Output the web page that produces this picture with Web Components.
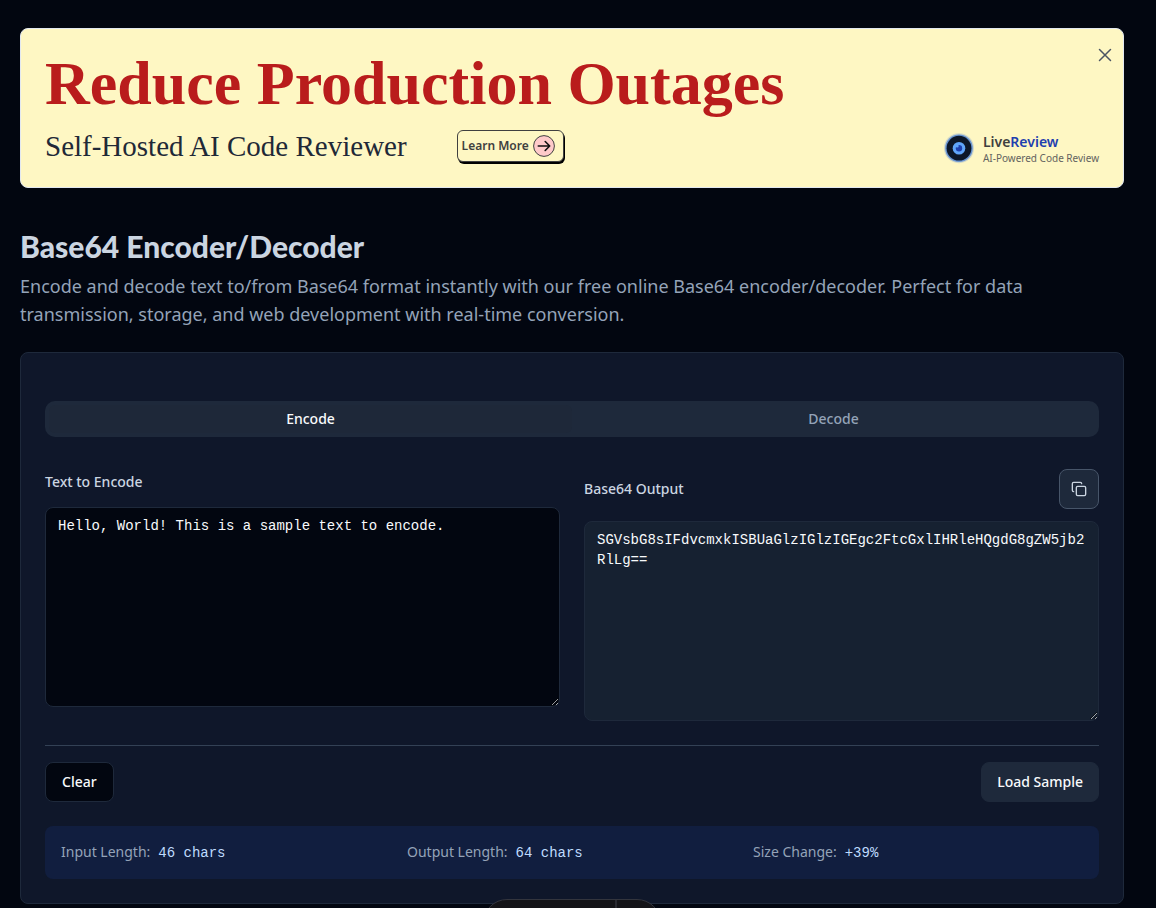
<!DOCTYPE html>
<html lang="en">
<head>
<meta charset="utf-8">
<meta name="viewport" content="width=device-width, initial-scale=1">
<title>Base64 Encoder/Decoder</title>
<style>
:root{
  --bg:#020610;--card:#0f172a;--line:#1e293b;--muted:#1e293b;--text:#f8fafc;--soft:#cbd5e1;--dim:#94a3b8;
  --mono:"Liberation Mono",monospace;
}
body{margin:0;background:var(--bg);color:var(--text);font-family:"Noto Sans",sans-serif;font-size:14px;line-height:20px}
</style>
</head>
<body>
<tool-page>
  <promo-banner slot="promo">
    <span slot="title">Reduce Production Outages</span>
    <span slot="subtitle">Self-Hosted AI Code Reviewer</span>
    <brand-mark slot="brand"></brand-mark>
  </promo-banner>
  <page-heading>
    <span slot="title">Base64 Encoder/Decoder</span>
    Encode and decode text to/from Base64 format instantly with our free online Base64 encoder/decoder. Perfect for data transmission, storage, and web development with real-time conversion.
  </page-heading>
  <base64-tool></base64-tool>
</tool-page>
<dock-pill></dock-pill>

<script>
const define = (name, html, setup) => {
  const template = document.createElement('template');
  template.innerHTML = html;
  customElements.define(name, class extends HTMLElement {
    constructor() {
      super();
      this.attachShadow({ mode: 'open' }).append(template.content.cloneNode(true));
      if (setup) setup(this.shadowRoot, this);
    }
  });
};

define('tool-page', `
<style>
  :host{display:block;padding:28px 32px 0 20px}
  main{display:flex;flex-direction:column;margin-top:40px;gap:24px}
</style>
<slot name="promo"></slot>
<main><slot></slot></main>`);

define('brand-mark', `
<style>
  :host{display:block}
  a{display:flex;align-items:center;gap:8px;text-decoration:none;color:#404040}
  svg{flex:none}
  strong{display:block;font-size:14px;line-height:18px;font-weight:600}
  b{color:#1e40af;font-weight:600}
  small{display:block;font-size:10px;line-height:14px;color:#636360}
</style>
<a href="#livereview">
  <svg width="32" height="32" viewBox="0 0 32 32" aria-hidden="true">
    <circle cx="16" cy="15.2" r="15" fill="#9db4cf" opacity=".45"/>
    <circle cx="16" cy="15.2" r="13.8" fill="#3b76d6" opacity=".7"/>
    <circle cx="16" cy="15.2" r="12.4" fill="#0d1729"/>
    <circle cx="16" cy="15.2" r="6.3" fill="#60a5fa"/>
    <circle cx="16" cy="15.2" r="3.2" fill="#1e40af"/>
    <circle cx="14.2" cy="13.1" r="1.5" fill="#60a5fa"/>
  </svg>
  <span><strong>Live<b>Review</b></strong><small>AI-Powered Code Review</small></span>
</a>`);

define('promo-banner', `
<style>
  :host{display:block}
  section{position:relative;display:flex;flex-direction:column;gap:14px;padding:24px 24px 22px;background:#fef7c3;border:1px solid #e2e8f0;border-radius:8px;font-family:"Noto Sans",sans-serif}
  h2{margin:0;font:700 62px/60px "Liberation Serif",serif;color:#b91c1c}
  .row{display:flex;align-items:center;gap:50px}
  p{margin:0;font:400 29px/38px "Liberation Serif",serif;color:#1f2937}
  ::slotted([slot=brand]){margin-left:auto;align-self:flex-end}
  .more{display:flex;align-items:center;gap:4px;height:32px;box-sizing:border-box;padding:0 8px 0 4px;border:1px solid #404040;border-radius:6px;box-shadow:1px 2px 0 #000;background:#fef7c3;color:#404040;text-decoration:none;font-size:12px;line-height:16px;font-weight:600;white-space:nowrap}
  .close{position:absolute;top:16px;right:8px;display:flex;padding:0;border:0;background:none;color:#4b5563;cursor:pointer}
</style>
<section>
  <h2><slot name="title"></slot></h2>
  <div class="row">
    <p><slot name="subtitle"></slot></p>
    <a class="more" href="#learn-more">Learn More
      <svg width="22" height="22" viewBox="0 0 22 22" aria-hidden="true">
        <circle cx="11" cy="11" r="10.4" fill="#fecaca" stroke="#404040"/>
        <path d="M5.3 11h11.4M12.2 6.5l4.5 4.5-4.5 4.5" fill="none" stroke="#111" stroke-width="1.6" stroke-linecap="round" stroke-linejoin="round"/>
      </svg>
    </a>
    <slot name="brand"></slot>
  </div>
  <button class="close" aria-label="Close">
    <svg width="20" height="20" viewBox="0 0 20 20" fill="none" stroke="currentColor" stroke-width="1.5" stroke-linecap="round"><path d="M4.5 4.5l11 11M15.5 4.5l-11 11"/></svg>
  </button>
</section>`, (root, host) => {
  root.querySelector('.close').addEventListener('click', () => host.remove());
});

define('page-heading', `
<style>
  :host{display:block}
  h1{margin:0 0 8px;font:900 30px/36px Lato,sans-serif;color:var(--soft)}
  p{margin:0;font-size:18px;line-height:28px;color:var(--dim)}
</style>
<h1><slot name="title"></slot></h1>
<p><slot></slot></p>`);

define('length-stat', `
<style>
  :host{display:flex;align-items:baseline;gap:8px;font-size:14px;line-height:20px;color:var(--dim)}
  .value{font-family:var(--mono);color:#bfdbfe}
</style>
<slot name="label"></slot><span class="value"><slot></slot></span>`);

define('base64-tool', `
<style>
  :host{display:block;padding:48px 24px 24px;background:var(--card);border:1px solid var(--line);border-radius:8px}
  button{font:500 14px/20px "Noto Sans",sans-serif;color:var(--text);cursor:pointer}
  .tabs{display:grid;grid-template-columns:1fr 1fr;padding:4px;background:var(--muted);border-radius:10px}
  .tabs button{padding:4px 12px;border:0;border-radius:6px;background:none;color:var(--dim)}
  .tabs button[aria-selected=true]{color:var(--text);background:#1e2839}
  .panes{display:grid;grid-template-columns:1fr 1fr;gap:24px;margin-top:32px;align-items:start}
  .pane{display:flex;flex-direction:column;gap:12px}
  .head{display:flex;align-items:center;justify-content:space-between}
  label{font-weight:500;line-height:26px;color:var(--soft)}
  textarea{display:block;box-sizing:border-box;width:100%;height:200px;margin:0;padding:8px 12px;border:1px solid var(--line);border-radius:8px;outline:0;resize:vertical;background:var(--bg);color:var(--text);font:400 14px/20px var(--mono)}
  textarea[readonly]{background:#162131}
  .copy{display:flex;align-items:center;justify-content:center;width:40px;height:40px;padding:0;border:1px solid #475569;border-radius:8px;background:var(--muted);color:var(--soft)}
  .actions{display:flex;justify-content:space-between;margin-top:24px;padding-top:16px;border-top:1px solid #334155}
  .actions button{height:40px;padding:0 16px;border:1px solid var(--line);border-radius:8px;background:var(--bg)}
  .actions .sample{padding:0 15px;background:var(--muted)}
  .stats{display:grid;grid-template-columns:repeat(3,1fr);gap:16px;margin-top:24px;padding:16px;border-radius:8px;background:#111e3f}
</style>
<div class="tabs" role="tablist">
  <button role="tab" aria-selected="true" data-mode="encode">Encode</button>
  <button role="tab" aria-selected="false" data-mode="decode">Decode</button>
</div>
<div class="panes">
  <div class="pane">
    <label for="input">Text to Encode</label>
    <textarea id="input" spellcheck="false">Hello, World! This is a sample text to encode.</textarea>
  </div>
  <div class="pane">
    <div class="head">
      <label for="output">Base64 Output</label>
      <button class="copy" aria-label="Copy output">
        <svg width="16" height="16" viewBox="0 0 24 24" fill="none" stroke="currentColor" stroke-width="2" stroke-linecap="round" stroke-linejoin="round"><rect x="8" y="8" width="14" height="14" rx="2"/><path d="M4 16c-1.1 0-2-.9-2-2V4c0-1.1.9-2 2-2h10c1.1 0 2 .9 2 2"/></svg>
      </button>
    </div>
    <textarea id="output" readonly spellcheck="false">SGVsbG8sIFdvcmxkISBUaGlzIGlzIGEgc2FtcGxlIHRleHQgdG8gZW5jb2RlLg==</textarea>
  </div>
</div>
<div class="actions"><button class="clear">Clear</button><button class="sample">Load Sample</button></div>
<div class="stats">
  <length-stat id="in"><span slot="label">Input Length:</span><span class="n">46 chars</span></length-stat>
  <length-stat id="out"><span slot="label">Output Length:</span><span class="n">64 chars</span></length-stat>
  <length-stat id="change"><span slot="label">Size Change:</span><span class="n">+39%</span></length-stat>
</div>`, root => {
  const $ = s => root.querySelector(s);
  const input = $('#input'), output = $('#output');
  const sample = input.value;
  let mode = 'encode';
  const encode = s => btoa(String.fromCharCode(...new TextEncoder().encode(s)));
  const decode = s => new TextDecoder().decode(Uint8Array.from(atob(s), c => c.charCodeAt(0)));
  const update = () => {
    try { output.value = mode === 'encode' ? encode(input.value) : decode(input.value); }
    catch { output.value = ''; }
    const a = input.value.length, b = output.value.length;
    const pct = a ? Math.round((b - a) / a * 100) : 0;
    $('#in .n').textContent = a + ' chars';
    $('#out .n').textContent = b + ' chars';
    $('#change .n').textContent = (pct > 0 ? '+' : '') + pct + '%';
  };
  input.addEventListener('input', update);
  $('.clear').addEventListener('click', () => { input.value = ''; update(); });
  $('.sample').addEventListener('click', () => { input.value = mode === 'encode' ? sample : encode(sample); update(); });
  $('.copy').addEventListener('click', () => navigator.clipboard?.writeText(output.value));
  root.querySelectorAll('[role=tab]').forEach(tab => tab.addEventListener('click', () => {
    mode = tab.dataset.mode;
    root.querySelectorAll('[role=tab]').forEach(t => t.setAttribute('aria-selected', String(t === tab)));
    $('label[for=input]').textContent = mode === 'encode' ? 'Text to Encode' : 'Base64 to Decode';
    $('label[for=output]').textContent = mode === 'encode' ? 'Base64 Output' : 'Decoded Text';
    update();
  }));
});

/* Floating dock that peeks over the bottom edge of the window. */
define('dock-pill', `
<style>
  :host{position:fixed;left:0;right:12px;bottom:-39px;display:flex;justify-content:center;pointer-events:none}
  div{display:flex;box-sizing:border-box;width:178px;height:48px;border:1px solid #33353d;border-radius:24px;background:#141418;overflow:hidden}
  i{flex:1;border-right:2px solid #292a31}
  b{flex:none;width:43px}
</style>
<div><i></i><b></b></div>`);
</script>
</body>
</html>
